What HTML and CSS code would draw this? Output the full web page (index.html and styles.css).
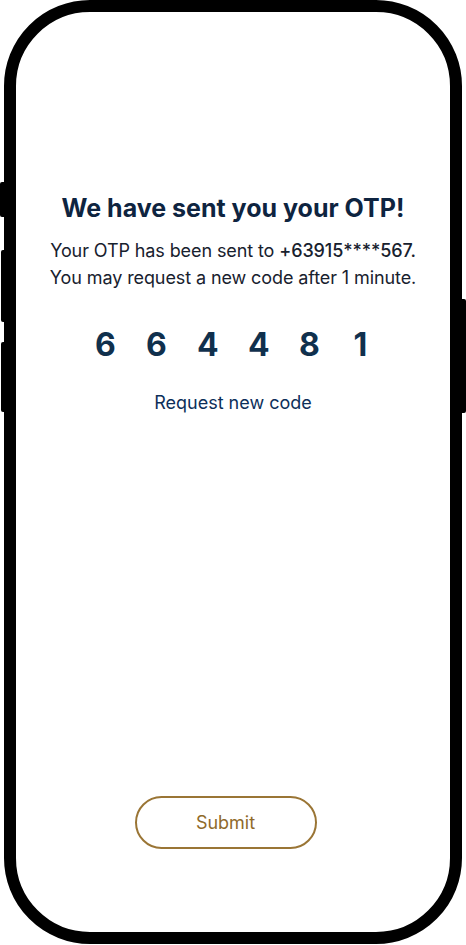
FILE: index.html
```html
<!DOCTYPE html>
<html lang="en">
<head>
    <meta charset="UTF-8">
    <meta name="viewport" content="width=device-width, initial-scale=1.0">
    <title>OTP Verification</title>
    <link rel="stylesheet" href="styles.css">
</head>
<body>
    <div class="device">
        <span class="side-btn left-1"></span>
        <span class="side-btn left-2"></span>
        <span class="side-btn left-3"></span>
        <span class="side-btn right-1"></span>

        <div class="phone">
            <h1 class="title">We have sent you your OTP!</h1>
            <p class="note">Your OTP has been sent to <span class="number">+63915****567.</span><br>You may request a new code after 1 minute.</p>

            <div class="otp">
                <span>6</span>
                <span>6</span>
                <span>4</span>
                <span>4</span>
                <span>8</span>
                <span>1</span>
            </div>

            <a href="#" class="resend">Request new code</a>

            <button class="submit">Submit</button>
        </div>
    </div>
</body>
</html>
```

FILE: styles.css
```css
body {
    margin: 0;
    font-family: Inter, "Noto Sans", sans-serif;
    background-color: #fff;
}
.device {
    position: relative;
    width: 466px;
    height: 945px;
}
.phone {
    box-sizing: border-box;
    margin: 0 4px;
    height: 944px;
    border: 12px solid #000;
    border-radius: 86px;
    display: flex;
    flex-direction: column;
    align-items: center;
    padding-top: 181px;
    padding-bottom: 83px;
}
.side-btn {
    position: absolute;
    width: 6px;
    background-color: #000;
    border-radius: 2px;
}
.left-1 { left: 0; top: 182px; height: 35px; }
.left-2 { left: 1px; top: 250px; height: 72px; }
.left-3 { left: 1px; top: 342px; height: 70px; }
.right-1 { right: 0; top: 299px; height: 114px; }
.title {
    margin: 0;
    font-size: 25px;
    line-height: 30px;
    font-weight: 700;
    color: #0e2440;
}
.note {
    margin: 14px 0 0;
    text-align: center;
    font-size: 18px;
    letter-spacing: -0.1px;
    line-height: 27px;
    color: #18212e;
}
.number {
    font-weight: 500;
}
.otp {
    display: flex;
    gap: 30px;
    margin-top: 34px;
    font-size: 32px;
    line-height: 40px;
    font-weight: 700;
    color: #10304d;
}
.otp span {
    width: 21px;
    text-align: center;
}
.resend {
    margin-top: 26px;
    font-size: 18px;
    line-height: 24px;
    color: #0d2f5a;
    text-decoration: none;
}
.submit {
    margin-top: auto;
    margin-right: 15px;
    width: 182px;
    height: 53px;
    border: 2px solid #9a7535;
    border-radius: 27px;
    background-color: #fff;
    color: #8f6a2a;
    font-family: Inter, "Noto Sans", sans-serif;
    font-size: 18px;
    cursor: pointer;
}
```
